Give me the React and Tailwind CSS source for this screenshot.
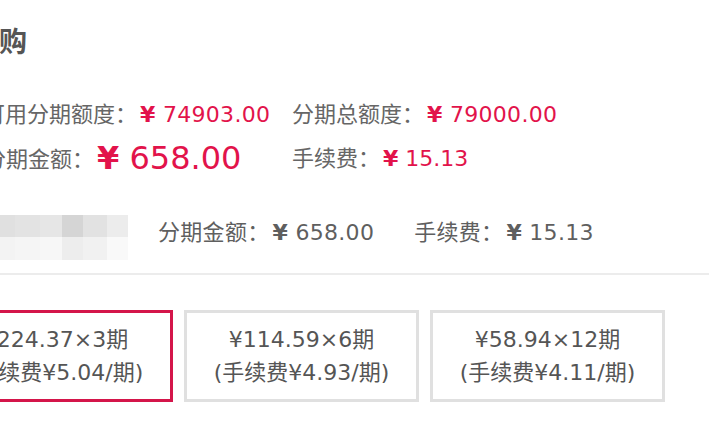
import React from "react";

const FONT = { fontFamily: "'DejaVu Sans', 'Noto Sans CJK SC', sans-serif" };

// obscured name block (pixel mosaic)
const mosaicTop = ["#e0e0e0", "#e3e3e3", "#e6e6e6", "#d5d5d5", "#e2e2e2", "#ececec"];
const mosaicBottom = ["#f3f3f3", "#f5f5f5", "#f7f7f7", "#ededed", "#f1f1f1", "#f9f9f9"];

function Mosaic() {
  return (
    <div className="grid grid-cols-[15px_25px_22px_21px_24px_21px] grid-rows-[22px_23px]">
      {mosaicTop.map((c, i) => (
        <div key={"t" + i} style={{ backgroundColor: c }} />
      ))}
      {mosaicBottom.map((c, i) => (
        <div key={"b" + i} style={{ backgroundColor: c }} />
      ))}
    </div>
  );
}

function Yen({ children }) {
  return (
    <>
      <span className="font-bold">¥</span> {children}
    </>
  );
}

const plans = [
  { per: "¥224.37×3期", fee: "(手续费¥5.04/期)", active: true },
  { per: "¥114.59×6期", fee: "(手续费¥4.93/期)" },
  { per: "¥58.94×12期", fee: "(手续费¥4.11/期)" },
];

export default function App() {
  return (
    <div
      className="w-[709px] h-[435px] overflow-hidden bg-white text-[#666] flex flex-col"
      style={FONT}
    >
      <div className="mt-[23px] h-[40px] leading-[40px] text-[28px] font-bold text-[#555] -ml-[1px]">
        购
      </div>

      <div className="mt-[36px] h-[32px] leading-[32px] text-[22px] flex -ml-[17px] whitespace-nowrap">
        <div className="w-[309px] flex">
          <span>可用分期额度：</span>
          <span className="ml-[3px] text-[#e2134b] tracking-[0.3px]">
            <Yen>74903.00</Yen>
          </span>
        </div>
        <div className="flex">
          <span>分期总额度：</span>
          <span className="ml-[3px] text-[#e2134b] tracking-[0.3px]">
            <Yen>79000.00</Yen>
          </span>
        </div>
      </div>

      <div className="mt-[5px] h-[44px] text-[22px] flex items-center -ml-[16px] whitespace-nowrap">
        <div className="w-[308px] flex items-center">
          <span className="leading-[44px] mt-[4px]">分期金额：</span>
          <span className="ml-[3px] text-[32px] leading-[44px] text-[#e2134b]">
            <Yen>658.00</Yen>
          </span>
        </div>
        <div className="flex items-center">
          <span>手续费：</span>
          <span className="ml-[3px] text-[#e2134b]">
            <Yen>15.13</Yen>
          </span>
        </div>
      </div>

      <div className="mt-[35px] h-[45px] flex items-start text-[22px] whitespace-nowrap">
        <Mosaic />
        <div className="ml-[30px] leading-[36px] text-[#5f5f5f] tracking-[0.3px]">
          分期金额：
          <span className="ml-[3px]">
            <Yen>658.00</Yen>
          </span>
        </div>
        <div className="ml-[40px] leading-[36px] text-[#5f5f5f] tracking-[0.3px]">
          手续费：
          <span className="ml-[3px]">
            <Yen>15.13</Yen>
          </span>
        </div>
      </div>

      <div className="mt-[13px] h-[2px] bg-[#ececec]" />

      <div className="mt-[35px] flex gap-[11px] -ml-[62px]">
        {plans.map((p) => (
          <div
            key={p.per}
            className={
              p.active
                ? "w-[235px] h-[92px] shrink-0 border-[3px] border-[#d4154a] flex flex-col items-center justify-center text-[22px] leading-[33px] text-[#555] whitespace-nowrap"
                : "w-[235px] h-[92px] shrink-0 border-[3px] border-[#e0e0e0] flex flex-col items-center justify-center text-[22px] leading-[33px] text-[#555] whitespace-nowrap"
            }
          >
            <div>{p.per}</div>
            <div>{p.fee}</div>
          </div>
        ))}
      </div>
    </div>
  );
}
